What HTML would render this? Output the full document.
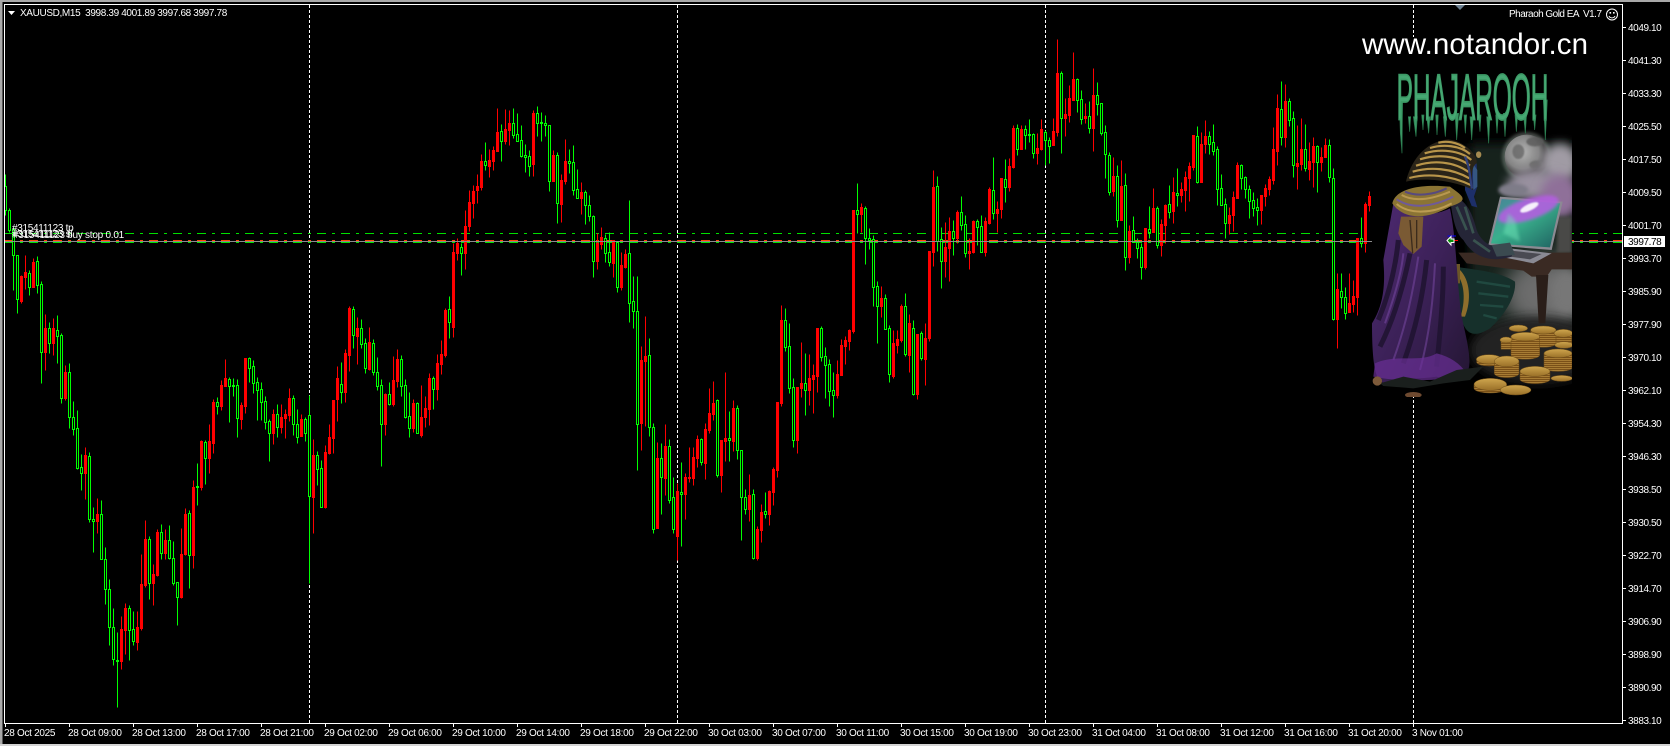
<!DOCTYPE html>
<html><head><meta charset="utf-8"><title>XAUUSD,M15</title>
<style>
html,body{margin:0;padding:0;background:#000;width:1670px;height:746px;overflow:hidden}
svg{display:block}
text{font-family:"Liberation Sans",Arial,sans-serif;font-size:10px;fill:#fff;letter-spacing:-.3px;white-space:pre}
.p text{letter-spacing:-.4px}
</style></head><body>
<svg width="1670" height="746" viewBox="0 0 1670 746" xmlns="http://www.w3.org/2000/svg">
<defs>
<filter id="b2" x="-50%" y="-50%" width="200%" height="200%"><feGaussianBlur stdDeviation="2"/></filter>
<filter id="b5" x="-50%" y="-50%" width="200%" height="200%"><feGaussianBlur stdDeviation="5"/></filter>
<filter id="b14" x="-60%" y="-60%" width="220%" height="220%"><feGaussianBlur stdDeviation="14"/></filter>
<filter id="b30" x="-60%" y="-60%" width="220%" height="220%"><feGaussianBlur stdDeviation="30"/></filter>
<clipPath id="ic"><rect x="1372" y="37" width="200" height="360"/></clipPath>
<clipPath id="ic2"><rect x="306" y="111" width="600" height="1080"/></clipPath>
<linearGradient id="scr" x1="0" y1="0" x2="1" y2="1"><stop offset="0" stop-color="#4a7f9a"/><stop offset=".45" stop-color="#39b08c"/><stop offset="1" stop-color="#1f5f60"/></linearGradient>
<radialGradient id="moon" cx=".4" cy=".4"><stop offset="0" stop-color="#b4b4b4"/><stop offset=".75" stop-color="#848484"/><stop offset="1" stop-color="#4c4c4c"/></radialGradient>
<linearGradient id="cape" x1="0" y1="0" x2="1" y2="1"><stop offset="0" stop-color="#4e2a72"/><stop offset=".5" stop-color="#3c2158"/><stop offset="1" stop-color="#241633"/></linearGradient>
<linearGradient id="coin" x1="0" y1="0" x2="0" y2="1"><stop offset="0" stop-color="#cfa64e"/><stop offset="1" stop-color="#9a7028"/></linearGradient>
<pattern id="stk" width="8" height="6" patternUnits="userSpaceOnUse"><rect width="8" height="6" fill="#7a5018"/><rect width="8" height="2.5" fill="#b0843a"/></pattern>
</defs>
<rect width="1670" height="746" fill="#000"/>
<!-- window edges -->
<rect x="0" y="0" width="1670" height="2" fill="#a8a8a8"/>
<rect x="0" y="0" width="2" height="746" fill="#a8a8a8"/>
<rect x="2" y="2" width="1" height="744" fill="#555"/>
<rect x="0" y="744" width="1670" height="2" fill="#d4d4d4"/>

<!-- vertical separators -->
<g stroke="#fff" stroke-width="1" stroke-dasharray="3 2" fill="none">
<path d="M309.5 5V723M677.5 5V723M1045.5 5V723M1413.5 5V723"/>
</g>

<!-- horizontal order lines -->
<g stroke-width="1" fill="none" stroke-dasharray="9 6 3 6">
<path d="M5 233.5H1622" stroke="#00e000"/>
<path d="M5 242.5H1622" stroke="#00e000"/>
<path d="M5 240.5H1622" stroke="#ff4500"/>
</g>

<!-- candles -->
<g transform="translate(.5 .5)" stroke-width="1">
<path fill="#000" stroke="#00ff00" d="M5 174V186M5 210V215M4 186h2V210h-2zM9 208V210M9 230V232M8 210h2V230h-2zM13 227V229M13 255V290M12 229h2V255h-2zM17 299V313M16 255h2V299h-2zM29 270V273M29 287V295M28 273h2V287h-2zM37 256V261M37 285V293M36 261h2V285h-2zM41 281V284M41 352V383M40 284h2V352h-2zM49 322V328M49 343V353M48 328h2V343h-2zM57 315V330M57 336V363M56 330h2V336h-2zM61 333V335M61 398V403M60 335h2V398h-2zM69 363V372M69 417V428M68 372h2V417h-2zM73 401V417M73 429V435M72 417h2V429h-2zM77 410V428M77 468V469M76 428h2V468h-2zM81 454V467M81 473V490M80 467h2V473h-2zM89 452V456M89 519V522M88 456h2V519h-2zM93 507V519M93 521V552M92 519h2V521h-2zM101 500V514M100 514h2V559h-2zM105 547V559M105 589V604M104 559h2V589h-2zM109 579V589M109 627V645M108 589h2V627h-2zM113 608V627M113 659V665M112 627h2V659h-2zM117 632V660M117 661V707M116 660h2V661h-2zM129 605V608M129 630V660M128 608h2V630h-2zM133 611V629M133 641V645M132 629h2V641h-2zM149 536V539M149 583V599M148 539h2V583h-2zM161 524V532M161 553V559M160 532h2V553h-2zM169 525V540M169 558V559M168 540h2V558h-2zM173 541V558M173 583V585M172 558h2V583h-2zM177 597V625M176 582h2V597h-2zM189 510V513M189 555V588M188 513h2V555h-2zM197 463V486M197 487V505M196 486h2V487h-2zM205 440V442M205 458V484M204 442h2V458h-2zM217 397V402M217 406V414M216 402h2V406h-2zM229 377V379M229 386V422M228 379h2V386h-2zM233 378V385M233 386V396M232 385h2V386h-2zM237 379V385M237 418V437M236 385h2V418h-2zM249 357V358M249 368V382M248 358h2V368h-2zM253 360V366M253 383V393M252 366h2V383h-2zM257 377V382M257 390V420M256 382h2V390h-2zM261 382V389M261 402V420M260 389h2V402h-2zM265 396V401M265 422V429M264 401h2V422h-2zM269 419V421M269 433V461M268 421h2V433h-2zM277 404V414M277 427V437M276 414h2V427h-2zM293 395V398M293 424V435M292 398h2V424h-2zM297 409V424M297 437V443M296 424h2V437h-2zM305 417V419M305 433V441M304 419h2V433h-2zM309 395V415M309 496V583M308 415h2V496h-2zM317 451V455M317 469V485M316 455h2V469h-2zM321 460V468M320 468h2V507h-2zM341 362V384M341 392V403M340 384h2V392h-2zM353 306V309M353 335V348M352 309h2V335h-2zM361 319V328M361 344V348M360 328h2V344h-2zM365 338V343M365 368V373M364 343h2V368h-2zM373 339V343M373 372V375M372 343h2V372h-2zM377 357V372M377 386V390M376 372h2V386h-2zM381 379V385M381 424V466M380 385h2V424h-2zM389 382V394M389 404V405M388 394h2V404h-2zM401 355V359M401 386V396M400 359h2V386h-2zM405 379V385M405 417V418M404 385h2V417h-2zM409 392V416M409 428V437M408 416h2V428h-2zM417 402V403M416 403h2V433h-2zM433 376V378M433 389V409M432 378h2V389h-2zM449 296V309M449 322V338M448 309h2V322h-2zM461 243V247M461 253V275M460 247h2V253h-2zM485 142V161M485 165V170M484 161h2V165h-2zM501 124V131M501 141V161M500 131h2V141h-2zM513 108V123M513 135V138M512 123h2V135h-2zM517 113V134M516 134h2V141h-2zM521 125V140M521 156V157M520 140h2V156h-2zM525 144V155M525 157V172M524 155h2V157h-2zM529 150V156M529 166V176M528 156h2V166h-2zM537 106V113M537 123V136M536 113h2V123h-2zM541 112V122M541 123V141M540 122h2V123h-2zM545 115V123M545 125V136M544 123h2V125h-2zM549 181V191M548 125h2V181h-2zM557 152V155M557 203V223M556 155h2V203h-2zM569 149V161M569 163V173M568 161h2V163h-2zM573 145V162M573 190V195M572 162h2V190h-2zM577 169V189M577 198V198M576 189h2V198h-2zM585 190V192M585 205V224M584 192h2V205h-2zM589 195V205M589 216V221M588 205h2V216h-2zM593 215V216M593 261V277M592 216h2V261h-2zM605 234V238M605 253V262M604 238h2V253h-2zM609 232V252M609 262V266M608 252h2V262h-2zM617 242V242M617 287V292M616 242h2V287h-2zM629 200V253M629 303V322M628 253h2V303h-2zM633 276V301M633 311V328M632 301h2V311h-2zM637 276V311M637 424V470M636 311h2V424h-2zM649 338V355M649 427V436M648 355h2V427h-2zM653 423V427M653 529V533M652 427h2V529h-2zM661 443V458M661 477V514M660 458h2V477h-2zM669 439V446M669 500V503M668 446h2V500h-2zM673 477V497M673 529V533M672 497h2V529h-2zM681 462V492M681 494V546M680 492h2V494h-2zM701 438V439M701 462V465M700 439h2V462h-2zM717 399V400M717 475V477M716 400h2V475h-2zM729 411V438M729 440V461M728 438h2V440h-2zM737 405V408M737 450V459M736 408h2V450h-2zM741 497V540M740 450h2V497h-2zM745 489V497M745 509V514M744 497h2V509h-2zM753 489V494M753 558V559M752 494h2V558h-2zM765 492V511M765 514V518M764 511h2V514h-2zM785 308V320M785 347V351M784 320h2V347h-2zM789 323V346M789 388V393M788 346h2V388h-2zM793 378V387M793 440V447M792 387h2V440h-2zM805 353V383M805 390V415M804 383h2V390h-2zM821 326V328M821 357V361M820 328h2V357h-2zM825 347V356M825 365V398M824 356h2V365h-2zM829 359V364M829 391V406M828 364h2V391h-2zM833 372V390M833 395V417M832 390h2V395h-2zM857 183V210M857 214V233M856 210h2V214h-2zM865 206V208M865 238V264M864 208h2V238h-2zM869 228V238M869 240V249M868 238h2V240h-2zM873 235V239M873 287V306M872 239h2V287h-2zM877 281V286M877 306V343M876 286h2V306h-2zM885 294V298M884 298h2V329h-2zM889 325V328M889 374V382M888 328h2V374h-2zM905 293V306M905 354V356M904 306h2V354h-2zM913 320V328M913 394V395M912 328h2V394h-2zM921 331V333M921 358V360M920 333h2V358h-2zM937 176V186M937 241V251M936 186h2V241h-2zM941 227V239M941 261V288M940 239h2V261h-2zM953 220V231M953 238V255M952 231h2V238h-2zM961 196V212M961 225V230M960 212h2V225h-2zM965 215V224M965 253V257M964 224h2V253h-2zM977 219V221M977 227V245M976 221h2V227h-2zM981 215V226M980 226h2V252h-2zM993 157V190M993 213V219M992 190h2V213h-2zM1005 159V179M1005 187V202M1004 179h2V187h-2zM1017 124V128M1017 149V155M1016 128h2V149h-2zM1025 125V129M1025 135V149M1024 129h2V135h-2zM1029 119V134M1029 135V142M1028 134h2V135h-2zM1033 133V134M1033 153V158M1032 134h2V153h-2zM1045 130V132M1045 140V165M1044 132h2V140h-2zM1049 137V140M1049 146V163M1048 140h2V146h-2zM1061 71V73M1061 118V153M1060 73h2V118h-2zM1077 78V79M1077 100V112M1076 79h2V100h-2zM1081 90V99M1081 119V124M1080 99h2V119h-2zM1089 101V116M1089 128V133M1088 116h2V128h-2zM1097 82V95M1097 104V115M1096 95h2V104h-2zM1101 133V135M1100 103h2V133h-2zM1105 125V132M1105 154V178M1104 132h2V154h-2zM1109 152V155M1109 192V195M1108 155h2V192h-2zM1117 165V176M1117 220V227M1116 176h2V220h-2zM1125 173V185M1125 257V270M1124 185h2V257h-2zM1133 216V230M1132 230h2V242h-2zM1137 238V242M1137 248V258M1136 242h2V248h-2zM1141 243V247M1141 267V279M1140 247h2V267h-2zM1149 206V229M1149 232V238M1148 229h2V232h-2zM1157 206V208M1157 245V248M1156 208h2V245h-2zM1169 185V204M1169 212V218M1168 204h2V212h-2zM1177 168V193M1177 195V206M1176 193h2V195h-2zM1197 126V136M1197 182V183M1196 136h2V182h-2zM1209 131V136M1209 144V154M1208 136h2V144h-2zM1213 124V142M1213 151V155M1212 142h2V151h-2zM1217 146V149M1217 189V205M1216 149h2V189h-2zM1221 174V188M1220 188h2V205h-2zM1225 198V204M1225 223V238M1224 204h2V223h-2zM1241 164V165M1241 178V189M1240 165h2V178h-2zM1245 176V177M1245 189V198M1244 177h2V189h-2zM1249 185V189M1249 201V218M1248 189h2V201h-2zM1253 192V200M1253 208V216M1252 200h2V208h-2zM1257 198V207M1257 210V225M1256 207h2V210h-2zM1281 81V109M1281 137V145M1280 109h2V137h-2zM1289 98V101M1289 120V126M1288 101h2V120h-2zM1293 111V118M1293 165V177M1292 118h2V165h-2zM1305 124V149M1305 168V171M1304 149h2V168h-2zM1317 145V146M1317 162V192M1316 146h2V162h-2zM1329 139V145M1329 177V182M1328 145h2V177h-2zM1333 168V178M1333 319V320M1332 178h2V319h-2zM1341 273V291M1341 297V308M1340 291h2V297h-2zM1345 287V297M1345 313V319M1344 297h2V313h-2zM1361 217V238M1361 243V247M1360 238h2V243h-2z"/>
<path fill="#ff0000" stroke="#ff0000" d="M21 275V303M20 276h2V301h-2zM25 255V289M24 272h2V277h-2zM33 258V287M32 262h2V287h-2zM45 314V370M44 328h2V352h-2zM53 318V355M52 328h2V343h-2zM65 365V400M64 372h2V398h-2zM85 447V499M84 455h2V473h-2zM97 498V533M96 514h2V521h-2zM121 616V669M120 629h2V661h-2zM125 603V654M124 608h2V630h-2zM137 611V650M136 627h2V642h-2zM141 554V630M140 584h2V628h-2zM145 520V587M144 539h2V585h-2zM153 564V605M152 574h2V583h-2zM157 529V576M156 532h2V575h-2zM165 529V559M164 540h2V553h-2zM181 528V598M180 554h2V597h-2zM185 508V555M184 514h2V554h-2zM193 480V568M192 487h2V555h-2zM201 440V490M200 441h2V487h-2zM209 424V473M208 441h2V458h-2zM213 399V453M212 402h2V443h-2zM221 380V410M220 385h2V406h-2zM225 359V386M224 378h2V386h-2zM241 402V429M240 405h2V419h-2zM245 358V413M244 358h2V406h-2zM273 409V444M272 414h2V433h-2zM281 404V433M280 417h2V427h-2zM285 409V438M284 414h2V418h-2zM289 388V421M288 398h2V415h-2zM301 414V436M300 419h2V436h-2zM313 439V533M312 455h2V497h-2zM325 445V508M324 452h2V507h-2zM329 424V454M328 437h2V453h-2zM333 400V453M332 400h2V438h-2zM337 366V421M336 378h2V399h-2zM345 349V402M344 353h2V392h-2zM349 306V371M348 308h2V355h-2zM357 317V364M356 328h2V336h-2zM369 327V370M368 342h2V369h-2zM385 393V435M384 394h2V424h-2zM393 356V406M392 380h2V404h-2zM397 349V387M396 359h2V381h-2zM413 399V432M412 403h2V428h-2zM421 385V437M420 417h2V435h-2zM425 396V427M424 408h2V417h-2zM429 373V425M428 378h2V409h-2zM437 354V400M436 363h2V389h-2zM441 340V374M440 354h2V364h-2zM445 308V357M444 310h2V355h-2zM453 243V337M452 252h2V327h-2zM457 238V260M456 243h2V253h-2zM465 210V269M464 226h2V253h-2zM469 190V231M468 202h2V226h-2zM473 185V218M472 191h2V203h-2zM477 174V203M476 186h2V190h-2zM481 154V190M480 161h2V187h-2zM489 149V177M488 160h2V166h-2zM493 146V170M492 150h2V161h-2zM497 108V151M496 132h2V151h-2zM505 109V144M504 129h2V141h-2zM509 110V145M508 123h2V130h-2zM533 110V176M532 113h2V164h-2zM553 150V181M552 155h2V181h-2zM561 174V222M560 180h2V204h-2zM565 139V184M564 161h2V181h-2zM581 182V214M580 192h2V198h-2zM597 233V269M596 243h2V261h-2zM601 227V249M600 237h2V244h-2zM613 240V277M612 240h2V263h-2zM621 252V290M620 265h2V287h-2zM625 249V268M624 254h2V267h-2zM641 346V450M640 360h2V423h-2zM645 316V426M644 356h2V361h-2zM657 442V528M656 458h2V528h-2zM665 424V495M664 446h2V478h-2zM677 483V560M676 491h2V536h-2zM685 473V519M684 477h2V494h-2zM689 447V482M688 477h2V478h-2zM693 447V485M692 457h2V478h-2zM697 435V467M696 439h2V458h-2zM705 423V479M704 429h2V463h-2zM709 388V433M708 413h2V430h-2zM713 381V420M712 403h2V414h-2zM721 440V492M720 440h2V475h-2zM725 372V461M724 438h2V441h-2zM733 400V451M732 408h2V441h-2zM749 474V521M748 495h2V509h-2zM757 526V560M756 529h2V558h-2zM761 504V542M760 512h2V530h-2zM769 490V525M768 491h2V514h-2zM773 467V505M772 469h2V492h-2zM777 402V477M776 402h2V470h-2zM781 305V406M780 320h2V403h-2zM797 387V453M796 387h2V440h-2zM801 342V397M800 383h2V388h-2zM809 354V405M808 378h2V390h-2zM813 364V413M812 375h2V379h-2zM817 328V392M816 328h2V376h-2zM837 360V398M836 374h2V395h-2zM841 339V375M840 345h2V375h-2zM845 336V364M844 340h2V346h-2zM849 329V350M848 330h2V341h-2zM853 210V333M852 210h2V331h-2zM861 203V232M860 207h2V214h-2zM881 286V317M880 298h2V306h-2zM893 330V378M892 343h2V376h-2zM897 330V353M896 339h2V345h-2zM901 304V342M900 306h2V340h-2zM909 314V372M908 323h2V355h-2zM917 334V399M916 334h2V394h-2zM925 323V385M924 338h2V359h-2zM929 251V341M928 251h2V338h-2zM933 170V266M932 187h2V252h-2zM945 222V277M944 247h2V261h-2zM949 217V281M948 231h2V248h-2zM957 210V243M956 212h2V238h-2zM969 238V269M968 251h2V253h-2zM973 220V253M972 221h2V252h-2zM985 217V256M984 221h2V252h-2zM989 187V224M988 189h2V223h-2zM997 201V232M996 209h2V213h-2zM1001 178V218M1000 178h2V209h-2zM1009 158V191M1008 166h2V187h-2zM1013 125V168M1012 128h2V167h-2zM1021 125V149M1020 129h2V149h-2zM1037 133V164M1036 148h2V153h-2zM1041 119V150M1040 129h2V149h-2zM1053 118V145M1052 131h2V145h-2zM1057 39V136M1056 73h2V132h-2zM1065 98V136M1064 114h2V118h-2zM1069 85V122M1068 98h2V115h-2zM1073 52V100M1072 79h2V100h-2zM1085 103V123M1084 116h2V118h-2zM1093 68V151M1092 95h2V128h-2zM1113 157V196M1112 176h2V191h-2zM1121 160V220M1120 186h2V220h-2zM1129 225V263M1128 231h2V257h-2zM1145 228V269M1144 228h2V267h-2zM1153 188V232M1152 208h2V232h-2zM1161 219V256M1160 224h2V245h-2zM1165 204V243M1164 205h2V225h-2zM1173 177V223M1172 192h2V211h-2zM1181 182V202M1180 189h2V195h-2zM1185 171V211M1184 177h2V190h-2zM1189 162V201M1188 166h2V178h-2zM1193 135V170M1192 135h2V167h-2zM1201 132V182M1200 144h2V182h-2zM1205 120V153M1204 136h2V144h-2zM1229 207V234M1228 215h2V223h-2zM1233 191V231M1232 197h2V215h-2zM1237 162V198M1236 165h2V198h-2zM1261 195V224M1260 195h2V210h-2zM1265 184V206M1264 188h2V196h-2zM1269 176V195M1268 179h2V189h-2zM1273 127V184M1272 149h2V180h-2zM1277 94V165M1276 108h2V151h-2zM1285 84V147M1284 101h2V137h-2zM1297 125V189M1296 163h2V166h-2zM1301 118V170M1300 149h2V164h-2zM1309 142V180M1308 161h2V169h-2zM1313 137V187M1312 146h2V162h-2zM1321 147V171M1320 157h2V162h-2zM1325 138V157M1324 145h2V157h-2zM1337 273V348M1336 289h2V319h-2zM1349 273V312M1348 303h2V312h-2zM1353 280V312M1352 296h2V304h-2zM1357 238V315M1356 238h2V297h-2zM1365 202V252M1364 204h2V243h-2zM1369 191V211M1368 196h2V205h-2z"/>
</g>
<!-- bid line above candles -->
<path d="M5 241.5H1622" stroke="#8c8c8c" fill="none"/>

<!-- pharaoh picture -->
<rect x="1372" y="37" width="200" height="360" fill="#000"/>
<g clip-path="url(#ic)">
<g transform="translate(1270 0) scale(.33333)" clip-path="url(#ic2)">
<!-- backdrop -->
<rect x="600" y="430" width="306" height="560" fill="#13241c" filter="url(#b14)"/>
<ellipse cx="830" cy="880" rx="130" ry="110" fill="#6c6c6c" filter="url(#b30)"/>
<ellipse cx="890" cy="880" rx="50" ry="70" fill="#777" filter="url(#b14)"/>
<ellipse cx="800" cy="1050" rx="200" ry="100" fill="#222" filter="url(#b14)"/>
<!-- moon -->
<circle cx="770" cy="470" r="74" fill="#a5b0a8" opacity=".4" filter="url(#b5)"/>
<circle cx="770" cy="470" r="66" fill="url(#moon)"/>
<ellipse cx="795" cy="425" rx="26" ry="14" fill="#5a5a5a" opacity=".8" filter="url(#b2)"/>
<ellipse cx="745" cy="455" rx="18" ry="22" fill="#666" opacity=".8" filter="url(#b2)"/>
<ellipse cx="800" cy="495" rx="22" ry="14" fill="#5f5f5f" opacity=".7" filter="url(#b2)"/>
<!-- smoke -->
<ellipse cx="870" cy="490" rx="55" ry="60" fill="#a09ba4" filter="url(#b14)"/>
<ellipse cx="800" cy="555" rx="90" ry="45" fill="#98909f" filter="url(#b14)"/>
<ellipse cx="870" cy="590" rx="60" ry="65" fill="#8f7099" filter="url(#b14)"/>
<ellipse cx="730" cy="570" rx="45" ry="20" fill="#7e7b88" filter="url(#b5)"/>
<rect x="860" y="650" width="46" height="110" fill="#4a4a46" filter="url(#b5)"/>
<!-- table -->
<path d="M565 758H906V808H845L830 830H785L760 812 590 790Z" fill="#3a2a23"/>
<path d="M798 825H835L826 970H806Z" fill="#2a1e19"/>
<!-- laptop -->
<path d="M690 590 878 605 845 750 655 735Z" fill="#8b8a92"/>
<path d="M695 597 870 610 840 742 663 730Z" fill="url(#scr)"/>
<ellipse cx="775" cy="628" rx="95" ry="32" fill="#b35fe0" opacity=".9" filter="url(#b5)" transform="rotate(-18 775 628)"/>
<ellipse cx="778" cy="622" rx="30" ry="10" fill="#fff" opacity=".9" filter="url(#b2)" transform="rotate(-25 778 622)"/>
<path d="M715 640 700 700 750 725 735 660Z" fill="#6fe3b8" opacity=".5" filter="url(#b5)"/>
<path d="M660 738 845 760 790 790 690 770Z" fill="#8a8a94"/>
<path d="M705 750 815 762 780 778 705 768Z" fill="#4a4a52"/>
<!-- legs -->
<path d="M555 800C620 810 690 815 735 845 740 890 700 950 660 985 620 1010 590 1010 575 960Z" fill="#16302b"/>
<path d="M570 810C600 840 605 900 585 950L572 950C590 890 580 840 555 815Z" fill="#8e6e2c"/>
<path d="M620 845 720 860M625 880 715 890M630 915 700 920M640 945 680 955" stroke="#25544a" stroke-width="7" fill="none" opacity=".7"/>
<path d="M540 792H570V850H545Z" fill="#6b5528"/>
<!-- coat/arm -->
<path d="M540 590C590 590 610 650 620 690 640 740 680 745 730 750L725 770C660 790 610 770 580 720 555 700 545 640 540 590Z" fill="#252537"/>
<path d="M560 620 590 690M585 620 610 700M610 720 660 755" stroke="#3f5f55" stroke-width="8" fill="none" opacity=".8"/>
<path d="M665 735 720 728 735 765 680 770Z" fill="#3b4a50"/>
<!-- cape -->
<path d="M372 600C420 650 490 650 540 625 560 720 560 850 575 950 590 1020 610 1090 590 1120 560 1125 540 1145 500 1130 440 1140 380 1130 350 1150 330 1148 306 1150 306 970 345 910 345 840 340 780 360 700 372 600Z" fill="url(#cape)"/>
<g fill="none" stroke="#1f1330" stroke-width="15" opacity=".85">
<path d="M420 760C400 860 370 960 330 1040"/>
<path d="M470 780C460 880 440 980 400 1090"/>
<path d="M520 800C520 900 510 1000 500 1100"/>
<path d="M385 720C375 820 350 900 325 960"/>
</g>
<g fill="none" stroke="#7c4ba8" stroke-width="6" opacity=".5">
<path d="M445 770C430 870 410 970 370 1080"/>
<path d="M495 790C490 890 480 1000 450 1110"/>
<path d="M400 760C395 820 370 900 345 970"/>
</g>
<path d="M315 1090C380 1060 450 1090 500 1060 540 1070 570 1090 590 1120 560 1140 400 1150 310 1130Z" fill="#6a2f96" opacity=".7"/>
<path d="M330 1150 400 1130 480 1145 560 1110 640 1100 600 1140 520 1150 430 1165 340 1158Z" fill="#1a1f1d"/>
<circle cx="322" cy="1143" r="14" fill="#7d5a3a"/>
<ellipse cx="430" cy="1185" rx="25" ry="9" fill="#6e4a30"/>
<!-- gold panel -->
<path d="M393 650 460 650 455 740 430 762 400 735 385 700Z" fill="#7a5a34"/>
<path d="M420 660 428 760M440 660 440 745" stroke="#3b2b1c" stroke-width="4"/>
<!-- collar -->
<path d="M367 610C375 570 440 550 540 560 580 590 600 600 540 620 470 660 400 660 367 610Z" fill="#8b7434"/>
<g fill="none" stroke-width="6">
<path d="M380 598C420 625 480 625 550 590" stroke="#6f5a9a"/>
<path d="M395 585C430 605 480 600 540 575" stroke="#b89850"/>
<path d="M380 612C420 645 490 640 545 610" stroke="#bc9c52"/>
<path d="M405 575C440 590 490 585 530 565" stroke="#584a7e"/>
</g>
<!-- face -->
<path d="M585 470 620 490 622 560 612 590 622 622 605 618 585 570Z" fill="#1d2f6a"/>
<path d="M608 490 622 510 622 560 610 570Z" fill="#3c6088" opacity=".8"/>
<ellipse cx="626" cy="464" rx="8" ry="10" fill="#a58a50"/>
<!-- nemes headdress -->
<path d="M408 545C420 490 460 425 535 418 590 425 625 470 620 490 598 500 608 560 610 570 560 545 470 530 408 545Z" fill="#2a2418"/>
<g fill="none" stroke="#b8954a" stroke-width="6.5">
<path d="M505 428C530 422 560 426 585 444"/>
<path d="M480 444C520 432 570 436 600 462"/>
<path d="M464 460C510 446 570 450 604 480"/>
<path d="M450 478C500 462 560 466 600 497"/>
<path d="M438 497C490 480 550 484 596 516"/>
<path d="M428 515C480 500 545 504 598 535"/>
<path d="M418 534C470 520 540 524 604 556"/>
</g>
<path d="M585 470C600 500 600 540 606 566" stroke="#31407a" stroke-width="7" fill="none"/>
<!-- coins -->
<g stroke="#6b4a17" stroke-width="1.5">
<g fill="url(#stk)">
<path d="M855 1000V1030A35 13 0 0 0 905 1030V1000Z"/>
<path d="M782 990V1030A38 12 0 0 0 858 1030V990Z"/>
<path d="M693 1020H726V1048H693Z"/>
<path d="M723 1010V1065A43 13 0 0 0 809 1065V1010Z"/>
<path d="M822 1060V1105A43 12 0 0 0 906 1105V1060Z"/>
<path d="M620 1080V1088A38 12 0 0 0 695 1088V1080Z"/>
<path d="M673 1085V1120A37 13 0 0 0 747 1120V1085Z"/>
<path d="M750 1115V1138A45 13 0 0 0 840 1138V1115Z"/>
<path d="M612 1155V1165A49 14 0 0 0 710 1165V1155Z"/>
</g>
<g fill="url(#coin)">
<ellipse cx="880" cy="1000" rx="28" ry="12"/>
<ellipse cx="745" cy="985" rx="28" ry="10"/>
<ellipse cx="820" cy="990" rx="38" ry="12"/>
<ellipse cx="708" cy="1020" rx="18" ry="9"/>
<ellipse cx="766" cy="1010" rx="43" ry="13"/>
<ellipse cx="864" cy="1060" rx="42" ry="13"/>
<ellipse cx="882" cy="1035" rx="28" ry="10"/>
<ellipse cx="657" cy="1078" rx="38" ry="14"/>
<ellipse cx="710" cy="1084" rx="37" ry="16"/>
<ellipse cx="795" cy="1114" rx="45" ry="15"/>
<ellipse cx="875" cy="1135" rx="32" ry="9"/>
<ellipse cx="661" cy="1153" rx="49" ry="18"/>
<ellipse cx="737" cy="1170" rx="46" ry="15"/>
</g>
</g>
<!-- title -->
<g fill="#3c9a66" stroke="#2a7a4e" stroke-width="2">
<path d="M388 300H398L396 460 391 400ZM415 350H422L419 395ZM430 350H442L438 410ZM455 345H462L459 390ZM470 350H480L476 400ZM497 345H505L501 405ZM520 350H530L526 410ZM555 340H566L560 420ZM582 345H590L586 400ZM600 350H610L605 420ZM625 345H633L630 395ZM650 350H660L656 430ZM677 345H685L681 400ZM700 340H710L705 410ZM735 345H743L739 395ZM760 340H770L766 400ZM790 345H798L794 390ZM820 300H832L826 420Z"/>
</g>
<text x="380" y="358" textLength="455" lengthAdjust="spacingAndGlyphs" style="font-size:195px;letter-spacing:0;fill:#46a873;stroke:#3c9a66;stroke-width:5px">PHAJAROOH</text>
</g>
</g>
<!-- arrow marker on picture -->
<path d="M1447.5 236H1456" stroke="#0000ff"/>
<path d="M1452 240.5H1458" stroke="#ff0000"/>
<path d="M1447 240.5l4-4v2.5h3v3.5h-3v2.5z" fill="#0a8a0a" stroke="#fff" stroke-width="1"/>

<!-- chart frame -->
<path d="M4.5 4.5H1622.5V723.5H4.5Z" fill="none" stroke="#fff"/>
<path d="M1455 5h10l-5 5z" fill="#6b7f90"/>

<!-- headings -->
<path d="M8 11h7l-3.5 4z" fill="#fff"/>
<text x="20" y="16" style="letter-spacing:-.36px">XAUUSD,M15  3998.39 4001.89 3997.68 3997.78</text>
<text x="1509" y="17" style="letter-spacing:-.52px">Pharaoh Gold EA  V1.7</text>
<g fill="none" stroke="#fff">
<circle cx="1612" cy="14.5" r="5.5"/>
<path d="M1609 16c1 2.5 5 2.5 6 0"/>
</g>
<path d="M1609.5 12h1.6v1.6h-1.6zM1613 12h1.6v1.6h-1.6z" fill="#fff"/>
<text x="1362" y="54" style="font-size:29.5px;letter-spacing:.1px">www.notandor.cn</text>

<!-- order labels -->
<text x="12" y="231">#315411123 tp</text>
<text x="12" y="237">#315411123 sl</text>
<text x="13" y="238" style="letter-spacing:-.25px">#315411123 buy stop 0.01</text>

<!-- price axis -->
<path stroke="#fff" fill="none" d="M1623 27.5h3M1623 60.5h3M1623 93.5h3M1623 126.5h3M1623 159.5h3M1623 192.5h3M1623 225.5h3M1623 258.5h3M1623 291.5h3M1623 324.5h3M1623 357.5h3M1623 390.5h3M1623 423.5h3M1623 456.5h3M1623 489.5h3M1623 522.5h3M1623 555.5h3M1623 588.5h3M1623 621.5h3M1623 654.5h3M1623 687.5h3M1623 720.5h3"/>
<g class="p">
<text x="1628" y="31">4049.10</text>
<text x="1628" y="64">4041.30</text>
<text x="1628" y="97">4033.30</text>
<text x="1628" y="130">4025.50</text>
<text x="1628" y="163">4017.50</text>
<text x="1628" y="196">4009.50</text>
<text x="1628" y="229">4001.70</text>
<text x="1628" y="262">3993.70</text>
<text x="1628" y="295">3985.90</text>
<text x="1628" y="328">3977.90</text>
<text x="1628" y="361">3970.10</text>
<text x="1628" y="394">3962.10</text>
<text x="1628" y="427">3954.30</text>
<text x="1628" y="460">3946.30</text>
<text x="1628" y="493">3938.50</text>
<text x="1628" y="526">3930.50</text>
<text x="1628" y="559">3922.70</text>
<text x="1628" y="592">3914.70</text>
<text x="1628" y="625">3906.90</text>
<text x="1628" y="658">3898.90</text>
<text x="1628" y="691">3890.90</text>
<text x="1628" y="724">3883.10</text>
<rect x="1624" y="236" width="41" height="11" fill="#fff"/>
<text x="1628" y="245" style="fill:#000">3997.78</text>
</g>

<!-- time axis -->
<path stroke="#fff" fill="none" d="M5.5 724v3M69.5 724v3M133.5 724v3M197.5 724v3M261.5 724v3M325.5 724v3M389.5 724v3M453.5 724v3M517.5 724v3M581.5 724v3M645.5 724v3M709.5 724v3M773.5 724v3M837.5 724v3M901.5 724v3M965.5 724v3M1029.5 724v3M1093.5 724v3M1157.5 724v3M1221.5 724v3M1285.5 724v3M1349.5 724v3M1413.5 724v3"/>
<g>
<text x="4" y="736">28 Oct 2025</text>
<text x="68" y="736">28 Oct 09:00</text>
<text x="132" y="736">28 Oct 13:00</text>
<text x="196" y="736">28 Oct 17:00</text>
<text x="260" y="736">28 Oct 21:00</text>
<text x="324" y="736">29 Oct 02:00</text>
<text x="388" y="736">29 Oct 06:00</text>
<text x="452" y="736">29 Oct 10:00</text>
<text x="516" y="736">29 Oct 14:00</text>
<text x="580" y="736">29 Oct 18:00</text>
<text x="644" y="736">29 Oct 22:00</text>
<text x="708" y="736">30 Oct 03:00</text>
<text x="772" y="736">30 Oct 07:00</text>
<text x="836" y="736">30 Oct 11:00</text>
<text x="900" y="736">30 Oct 15:00</text>
<text x="964" y="736">30 Oct 19:00</text>
<text x="1028" y="736">30 Oct 23:00</text>
<text x="1092" y="736">31 Oct 04:00</text>
<text x="1156" y="736">31 Oct 08:00</text>
<text x="1220" y="736">31 Oct 12:00</text>
<text x="1284" y="736">31 Oct 16:00</text>
<text x="1348" y="736">31 Oct 20:00</text>
<text x="1412" y="736">3 Nov 01:00</text>
</g>
</svg>
</body></html>
